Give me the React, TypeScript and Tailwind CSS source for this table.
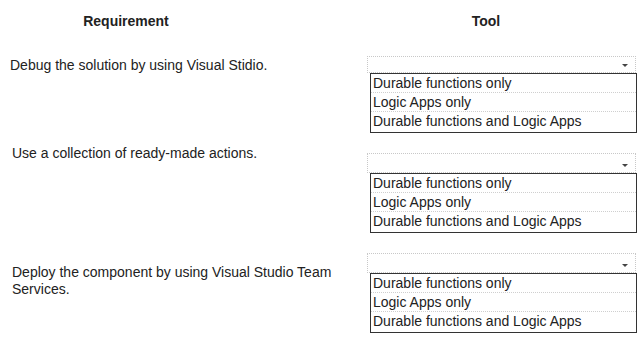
const OPTIONS = ['Durable functions only', 'Logic Apps only', 'Durable functions and Logic Apps'];

const ROWS = [
  { text: ['Debug the solution by using Visual Stidio.'], textTop: 'mt-[1px]', selH: 'h-[17px]', h: 'h-[97px]', left: 'pl-[10px]' },
  { text: ['Use a collection of ready-made actions.'], textTop: '-mt-[8px]', selH: 'h-[20px]', h: 'h-[100px]', left: 'pl-[12px]' },
  { text: ['Deploy the component by using Visual Studio Team', 'Services.'], textTop: 'mt-[11px]', selH: 'h-[20px]', h: 'h-[91px]', left: 'pl-[12px]' },
];

function Dropdown({ selH }: { selH: string }) {
  return (
    <div className="flex flex-col">
      <div className={`relative ${selH} w-[269px] border border-dotted border-[#c8c8c8] bg-white`}>
        <span className="absolute right-[7px] bottom-[5px] h-0 w-0 border-x-[3px] border-t-[3px] border-x-transparent border-t-[#444]" />
      </div>
      <div className="ml-[3px] w-[267px] border border-[#333] bg-white">
        {OPTIONS.map((o, i) => (
          <div
            key={o}
            className={`pl-[2px] text-[14px] text-[#222] ${i < OPTIONS.length - 1 ? 'h-[19px] leading-[19px] border-b border-dotted border-[#cfcfcf]' : 'h-[20px] leading-[19px]'}`}
          >
            {o}
          </div>
        ))}
      </div>
    </div>
  );
}

export default function App() {
  return (
    <div className="h-[344px] w-[644px] overflow-hidden bg-white font-['Liberation_Sans',Arial,sans-serif] text-[#222]">
      <div className="flex h-[56px] pt-[11px] text-[14px] font-bold">
        <div className="w-[252px] text-center">Requirement</div>
        <div className="ml-[114px] w-[240px] text-center">Tool</div>
      </div>
      {ROWS.map((r, i) => (
        <div key={i} className={`flex ${r.h}`}>
          <div className={`w-[367px] ${r.left} text-[14px] leading-[17px]`}>
            <div className={r.textTop}>
              {r.text.map((t) => (
                <div key={t}>{t}</div>
              ))}
            </div>
          </div>
          <Dropdown selH={r.selH} />
        </div>
      ))}
    </div>
  );
}
